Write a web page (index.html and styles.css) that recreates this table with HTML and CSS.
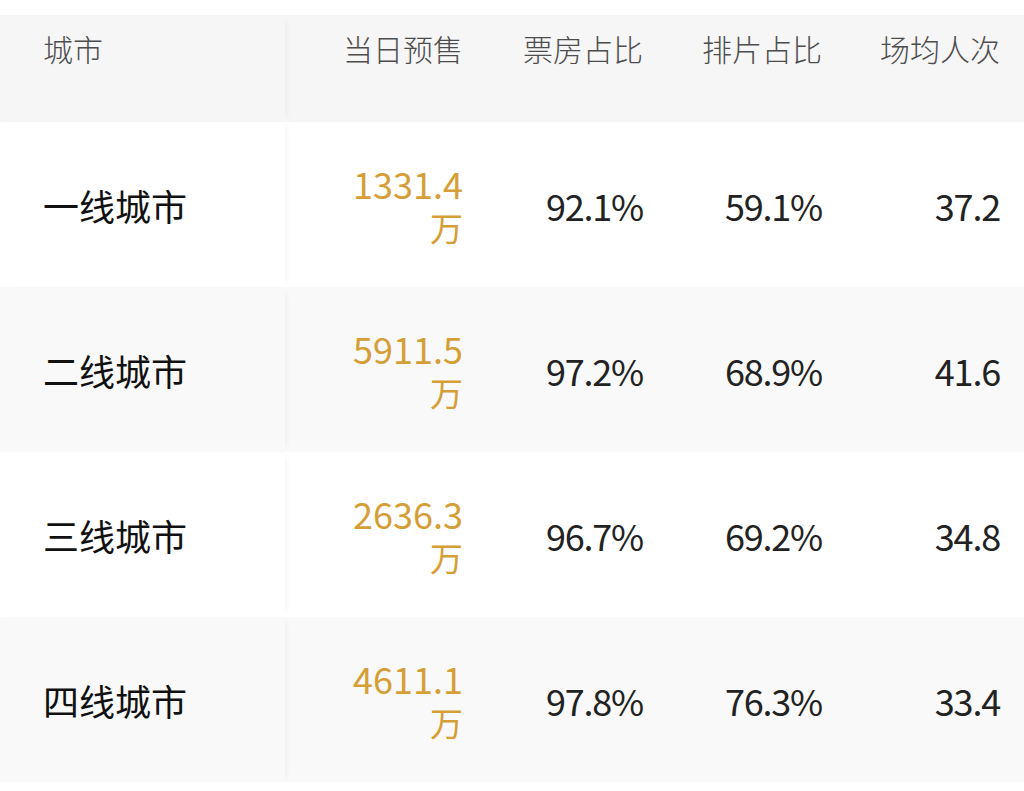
FILE: index.html
```html
<!DOCTYPE html>
<html lang="zh">
<head>
<meta charset="utf-8">
<link rel="stylesheet" href="styles.css">
</head>
<body>
<div class="table">
  <div class="row head">
    <div class="cell first">城市</div>
    <div class="cell">当日预售</div>
    <div class="cell">票房占比</div>
    <div class="cell">排片占比</div>
    <div class="cell">场均人次</div>
  </div>
  <div class="row odd">
    <div class="cell first name">一线城市</div>
    <div class="cell presale"><span>1331.4</span><span>万</span></div>
    <div class="cell num">92.1%</div>
    <div class="cell num">59.1%</div>
    <div class="cell num">37.2</div>
  </div>
  <div class="row even">
    <div class="cell first name">二线城市</div>
    <div class="cell presale"><span>5911.5</span><span>万</span></div>
    <div class="cell num">97.2%</div>
    <div class="cell num">68.9%</div>
    <div class="cell num">41.6</div>
  </div>
  <div class="row odd">
    <div class="cell first name">三线城市</div>
    <div class="cell presale"><span>2636.3</span><span>万</span></div>
    <div class="cell num">96.7%</div>
    <div class="cell num">69.2%</div>
    <div class="cell num">34.8</div>
  </div>
  <div class="row even">
    <div class="cell first name">四线城市</div>
    <div class="cell presale"><span>4611.1</span><span>万</span></div>
    <div class="cell num">97.8%</div>
    <div class="cell num">76.3%</div>
    <div class="cell num">33.4</div>
  </div>
</div>
</body>
</html>
```

FILE: styles.css
```css
html, body {
  margin: 0;
  padding: 0;
  background: #ffffff;
}
body {
  font-family: "Noto Sans CJK SC", "Noto Sans", sans-serif;
  color: #1f1f1f;
}
.table {
  padding-top: 15px;
  width: 1024px;
}
.row {
  display: grid;
  grid-template-columns: 285px 178px 180px 179px 178px;
  align-items: center;
}
.row.head {
  height: 107px;
  background: #f6f6f6;
  align-items: start;
}
.row.odd {
  height: 165px;
  background: #ffffff;
}
.row.even {
  height: 165px;
  background: #f9f9f9;
}
.cell {
  text-align: right;
}
.cell.first {
  text-align: left;
  padding-left: 43px;
  align-self: stretch;
  display: flex;
  align-items: center;
  box-shadow: 5px 0 8px -5px rgba(0, 0, 0, 0.06);
}
.head .cell {
  font-size: 30px;
  line-height: 40px;
  padding-top: 13px;
  color: #4d4d4d;
  font-weight: 300;
}
.head .cell.first {
  align-items: flex-start;
}
.name {
  font-size: 36px;
  font-weight: 400;
  color: #111111;
}
.presale {
  display: flex;
  flex-direction: column;
  align-items: flex-end;
  color: #d69e36;
  font-size: 36px;
  line-height: 44px;
  font-weight: 400;
}
.presale span {
  display: block;
  height: 44px;
  overflow: visible;
}
.presale span:last-child {
  font-size: 33px;
}
.num {
  font-size: 36px;
  line-height: 40px;
  color: #222222;
  font-weight: 400;
  letter-spacing: -1.2px;
}
```
